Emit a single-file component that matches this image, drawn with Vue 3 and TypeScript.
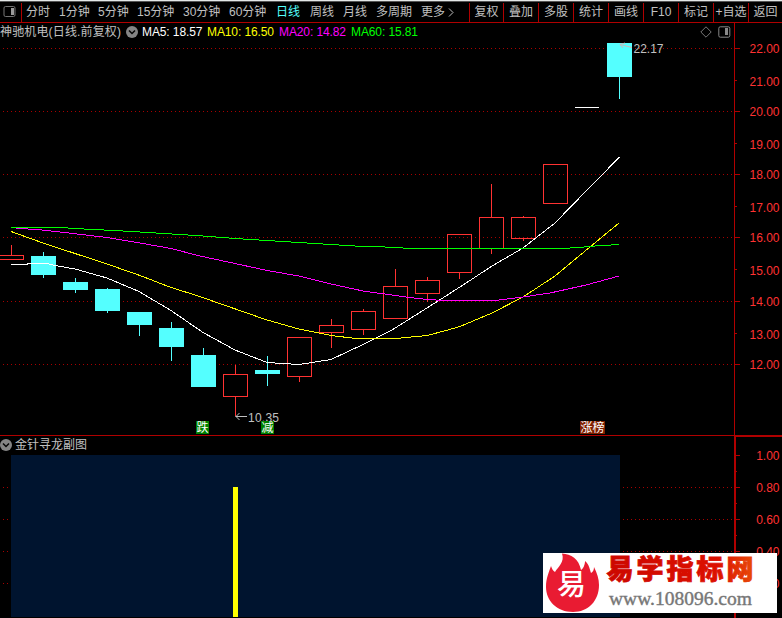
<script setup lang="ts">
interface Candle {
  x: number
  kind: 'up' | 'down'
  top: number
  bottom: number
  high: number
  low: number
}

interface Level {
  y: number
  base: number
  label: string
  major: boolean
}

const periods: string[] = ['分时', '1分钟', '5分钟', '15分钟', '30分钟', '60分钟', '日线', '周线', '月线', '多周期']
const activePeriod = '日线'
const tools: string[] = ['复权', '叠加', '多股', '统计', '画线', 'F10', '标记', '+自选', '返回']

const averages = [
  { cls: 'ma5', text: 'MA5: 18.57' },
  { cls: 'ma10', text: 'MA10: 16.50' },
  { cls: 'ma20', text: 'MA20: 14.82' },
  { cls: 'ma60', text: 'MA60: 15.81' },
]

const c = (x: number, kind: 'up' | 'down', top: number, bottom: number, high: number, low: number): Candle => ({
  x, kind, top, bottom, high, low,
})

const candles: Candle[] = [
  c(11, 'up', 255, 260, 245, 260),
  c(43, 'down', 256, 275, 252, 278),
  c(75, 'down', 282, 290, 278, 293),
  c(107, 'down', 289, 311, 288, 313),
  c(139, 'down', 312, 325, 312, 336),
  c(171, 'down', 328, 347, 322, 361),
  c(203, 'down', 355, 387, 348, 387),
  c(235, 'up', 374, 397, 365, 416),
  c(267, 'down', 370, 374, 356, 386),
  c(299, 'up', 337, 377, 337, 382),
  c(331, 'up', 325, 333, 319, 348),
  c(363, 'up', 311, 330, 309, 335),
  c(395, 'up', 286, 319, 269, 319),
  c(427, 'up', 280, 294, 277, 302),
  c(459, 'up', 234, 273, 234, 279),
  c(491, 'up', 217, 249, 184, 254),
  c(523, 'up', 217, 239, 216, 241),
  c(555, 'up', 164, 204, 164, 204),
  c(619, 'down', 43, 77, 43, 99),
]

const wicks = (k: Candle): string => `M${k.x + 0.5} ${k.high}V${k.top}M${k.x + 0.5} ${k.bottom}V${k.low}`

const lines = [
  { cls: 'ma5', d: '11,264.5 27,264.5 28,263.5 47,263.5 55,265.5 75,269 107,278 139,291.5 171,310.5 203,332.5 235,350 267,362.5 299,364.5 331,359.5 363,344.5 392,330 442,298.5 470,280.5 492,266 523,248 555,223 570,207.5 619.5,157' },
  { cls: 'ma10', d: '11,231.5 43,243 75,253.5 107,264 140,275.5 171,287.5 200,296.5 211,300.5 267,320 299,329 331,335.5 356,338.5 396,338.5 427,335.5 448,330 460,326.5 492,313 523,297 555,276 570,263.5 619,223' },
  { cls: 'ma20', d: '11,227.5 20,228.5 36,229.5 47,230.5 73,233.5 107,237.5 140,243 171,248.5 200,256 235,263.5 267,270.5 299,276 331,284 363,291 406,297 427,299.5 445,300.5 495,300.5 523,297 550,293 586,285 619,276' },
  { cls: 'ma60', d: '11,227.5 60,227.5 92,229.5 115,230.5 148,232.5 180,234.5 203,236 235,238.5 267,240.5 299,242.5 331,244.5 363,246.5 379,246.7 412,248.5 562,248.5 578,247.5 595,246 619,244.5' },
]

const priceLevels: Level[] = [
  { y: 48, base: 53, label: '22.00', major: true },
  { y: 80, base: 86, label: '21.00', major: false },
  { y: 111, base: 116, label: '20.00', major: true },
  { y: 143, base: 149, label: '19.00', major: false },
  { y: 174, base: 179, label: '18.00', major: true },
  { y: 206, base: 212, label: '17.00', major: false },
  { y: 237, base: 242, label: '16.00', major: true },
  { y: 269, base: 275, label: '15.00', major: false },
  { y: 301, base: 306, label: '14.00', major: true },
  { y: 333, base: 339, label: '13.00', major: false },
  { y: 364, base: 369, label: '12.00', major: true },
]

const signalLevels: Level[] = [
  { y: 455, base: 460, label: '1.00', major: true },
  { y: 487, base: 492, label: '0.80', major: true },
  { y: 519, base: 524, label: '0.60', major: true },
  { y: 551, base: 556, label: '0.40', major: true },
  { y: 583, base: 588, label: '0.20', major: true },
]
const signalMinor: number[] = [471, 503, 535, 567, 599]
</script>

<template>
  <div class="terminal">
    <nav class="toolbar">
      <div class="dock">
        <svg width="13" height="13" viewBox="0 0 13 13">
          <rect x="1" y="1.5" width="11" height="10" rx="1.5" fill="none" stroke="#747474" />
          <rect x="8" y="3" width="3" height="7" fill="#9a9a9a" />
        </svg>
      </div>
      <div class="periods">
        <span v-for="p in periods" :key="p" :class="{ active: p === activePeriod }">{{ p }}</span>
        <span class="more">更多
          <svg width="7" height="11" viewBox="0 0 7 11"><path d="M1 1.5L5 5.5L1 9.5" fill="none" stroke="#c0c0c0" /></svg>
        </span>
      </div>
      <div class="tools">
        <span v-for="t in tools" :key="t">{{ t }}</span>
      </div>
    </nav>

    <section class="panel price">
      <header>
        <span class="name">神驰机电(日线.前复权)</span>
        <svg class="chevron" width="12" height="12" viewBox="0 0 12 12">
          <circle cx="6" cy="6" r="6" fill="#858585" />
          <path d="M3 4.5L6 7.5L9 4.5" fill="none" stroke="#050505" stroke-width="1.5" />
        </svg>
        <span v-for="a in averages" :key="a.cls" :class="['avg', a.cls]">{{ a.text }}</span>
        <span class="marks">
          <svg width="12" height="12" viewBox="0 0 12 12"><path d="M6 .8L11.2 6L6 11.2L.8 6Z" fill="none" stroke="#777" /></svg>
          <svg width="13" height="12" viewBox="0 0 13 12">
            <rect x=".8" y=".8" width="11" height="10.4" rx="1.5" fill="none" stroke="#888" />
            <rect x="7" y="2" width="3" height="7" fill="#888" />
          </svg>
        </span>
        <span class="gutter"></span>
      </header>
      <svg class="chart" width="782" height="394" viewBox="0 41 782 394">
        <g shape-rendering="crispEdges">
          <template v-for="l in priceLevels" :key="l.y">
            <path v-if="l.major" class="grid" :d="`M3 ${l.y + 0.5}H734`" />
            <path class="axis" :d="`M735 ${l.y + 0.5}h${l.major ? 5 : 2}`" />
          </template>
          <path class="axis" d="M734.5 41V435" />
          <g v-for="k in candles" :key="k.x">
            <path :class="['wick', k.kind]" :d="wicks(k)" />
            <rect v-if="k.kind === 'down'" class="solid" :x="k.x - 12" :y="k.top" width="25" :height="k.bottom - k.top" />
            <rect v-else class="hollow" :x="k.x - 11.5" :y="k.top + 0.5" width="24" :height="k.bottom - k.top - 1" />
          </g>
          <path d="M575 107.5H599" stroke="#fff" />
          <polyline v-for="l in lines" :key="l.cls" :class="['line', l.cls]" :points="l.d" />
        </g>
        <g class="pointer">
          <path class="peak" d="M632 47.5L620 44.5M625 43L620 44.5L623 48" />
          <path d="M247 416.5H235.5M239.5 413L236 416.5L239.5 420" />
          <text x="633.5" y="53" textLength="30">22.17</text>
          <text x="248" y="422" textLength="31">10.35</text>
        </g>
        <rect class="sell" x="196" y="421" width="13" height="13" />
        <rect class="sell" x="261" y="421" width="13" height="13" />
        <rect class="rank" x="580" y="421" width="25" height="13" />
        <text class="tag" x="196.5" y="432">跌</text>
        <text class="tag" x="261.5" y="432">减</text>
        <text class="tag" x="580.5" y="432">涨榜</text>
        <text v-for="l in priceLevels" :key="l.label" class="scale" x="779.5" :y="l.base">{{ l.label }}</text>
      </svg>
    </section>

    <section class="panel signal">
      <header>
        <svg class="chevron" width="12" height="12" viewBox="0 0 12 12">
          <circle cx="6" cy="6" r="6" fill="#858585" />
          <path d="M3 4.5L6 7.5L9 4.5" fill="none" stroke="#050505" stroke-width="1.5" />
        </svg>
        <span class="name">金针寻龙副图</span>
        <span class="gutter"></span>
      </header>
      <svg class="chart" width="782" height="164" viewBox="0 454 782 164">
        <g shape-rendering="crispEdges">
          <template v-for="l in signalLevels" :key="l.y">
            <path v-if="l.y > 455" class="grid" :d="`M3 ${l.y + 0.5}H734`" />
            <path class="axis" :d="`M736 ${l.y + 0.5}h4`" />
          </template>
          <path v-for="y in signalMinor" :key="y" class="axis" :d="`M736 ${y + 0.5}h1`" />
          <path class="axis thick" d="M735 454V618" />
          <rect x="11" y="455" width="609" height="162" fill="#00142f" />
          <rect x="233" y="487" width="5" height="130" fill="#ff0" />
        </g>
        <text v-for="l in signalLevels" :key="l.label" class="scale" x="779.5" :y="l.base">{{ l.label }}</text>
      </svg>
    </section>

    <aside class="badge">
      <svg class="chart" width="234" height="60" viewBox="0 0 234 60">
        <defs>
          <linearGradient id="title" x1="0" x2="1">
            <stop offset="0" stop-color="#cc0800" />
            <stop offset=".75" stop-color="#dc1000" />
            <stop offset="1" stop-color="#e84a08" />
          </linearGradient>
        </defs>
        <path d="M19 .5C28 1 36 6 38 17C40 16 42 12 42 8C46 11 47 17 48 20C50 19 51 17 51 14C54 20 56 26 56 32C56 48 45 59 30 59C14 59 3 48 3 34C3 25 6 19 8 13C9 16 10 18 12 19C15 14 22 9 19 .5Z" fill="#e91b32" />
        <text class="logo" x="28.5" y="42">易</text>
        <text class="title" x="63.5" y="26" textLength="147">易学指标网</text>
        <text class="site" x="66" y="52" textLength="143" lengthAdjust="spacingAndGlyphs">www.108096.com</text>
      </svg>
    </aside>
  </div>
</template>

<style>
body {
  margin: 0;
  background: #000;
}
</style>

<style scoped>
.terminal {
  position: relative;
  width: 782px;
  height: 618px;
  overflow: hidden;
  background: #000;
  color: #c0c0c0;
  font: 12px/18px "Liberation Sans", "Noto Sans CJK SC", sans-serif;
  white-space: nowrap;
}
.toolbar {
  display: flex;
  box-sizing: border-box;
  height: 23px;
  border-top: 1px solid #e4e8e8;
  border-bottom: 1px solid #b00000;
  box-shadow: inset 0 1px #555;
  line-height: 20px;
}
.dock {
  display: flex;
  align-items: center;
  box-sizing: border-box;
  width: 22px;
  margin-top: 2px;
  padding: 0 0 2px 3px;
  border-right: 1px solid #b00000;
}
.periods {
  display: grid;
  grid-template-columns: 33px 39px 39px 46px 46px 47px 34px 33px 33px 45px 1fr;
  width: 443px;
  padding: 1px 0 0 4px;
}
.active {
  color: #54ffff;
}
.more {
  display: flex;
  align-items: center;
  gap: 3px;
}
.tools {
  display: grid;
  grid-template-columns: 34px 35px 35px 35px 35px 35px 35px 35px 34px;
  margin-top: 2px;
  line-height: 18px;
}
.tools span {
  display: flex;
  justify-content: center;
  border-left: 1px solid #b00000;
}
.panel header {
  display: flex;
  align-items: center;
  height: 18px;
}
.chart {
  display: block;
  overflow: visible;
}
.price .name {
  width: 126px;
  letter-spacing: 0.15px;
}
.price .chevron {
  margin-right: 4px;
}
.avg {
  width: 65px;
  letter-spacing: -0.1px;
}
.avg.ma10, .avg.ma20 {
  width: 72px;
}
.ma5 { color: #fff; }
.ma10 { color: #ff0; }
.ma20 { color: #f0f; }
.ma60 { color: #0f0; }
.marks {
  display: flex;
  align-items: center;
  gap: 6px;
  margin-left: auto;
  padding-right: 3px;
}
.gutter {
  box-sizing: border-box;
  align-self: stretch;
  width: 48px;
  border-left: 1px solid #b00000;
}
.signal {
  border-top: 1px solid #b00000;
}
.signal .name {
  margin-left: 3px;
}
.signal .gutter {
  margin-left: auto;
  border-left-width: 2px;
  border-top: 1px solid #b00000;
}
.grid {
  stroke: #a80000;
  stroke-dasharray: 1 3;
}
.axis {
  stroke: #b00000;
}
.thick {
  stroke-width: 2;
}
.wick.up { stroke: #ff3232; }
.wick.down { stroke: #54ffff; }
.solid { fill: #54ffff; }
.hollow {
  fill: none;
  stroke: #ff3232;
}
.line {
  fill: none;
  stroke: currentColor;
}
.pointer path {
  fill: none;
  stroke: #c0c0c0;
}
.pointer .peak {
  stroke: #d0b4b8;
}
.pointer text {
  fill: #c0c0c0;
}
.sell { fill: #008000; }
.rank { fill: #802000; }
.tag { fill: #fff; }
.scale {
  fill: #ff3232;
  text-anchor: end;
}
.badge {
  position: absolute;
  left: 543px;
  top: 553px;
  width: 234px;
  height: 60px;
  background: #fff;
}
.logo {
  fill: #fff;
  font: 500 29px "Noto Sans CJK SC", sans-serif;
  text-anchor: middle;
}
.title {
  fill: url(#title);
  stroke: url(#title);
  stroke-width: 0.8;
  font: 900 27px "Noto Sans CJK SC", sans-serif;
}
.site {
  fill: #777;
  stroke: #777;
  stroke-width: 0.4;
  font: 19px "Liberation Serif", serif;
}
</style>
